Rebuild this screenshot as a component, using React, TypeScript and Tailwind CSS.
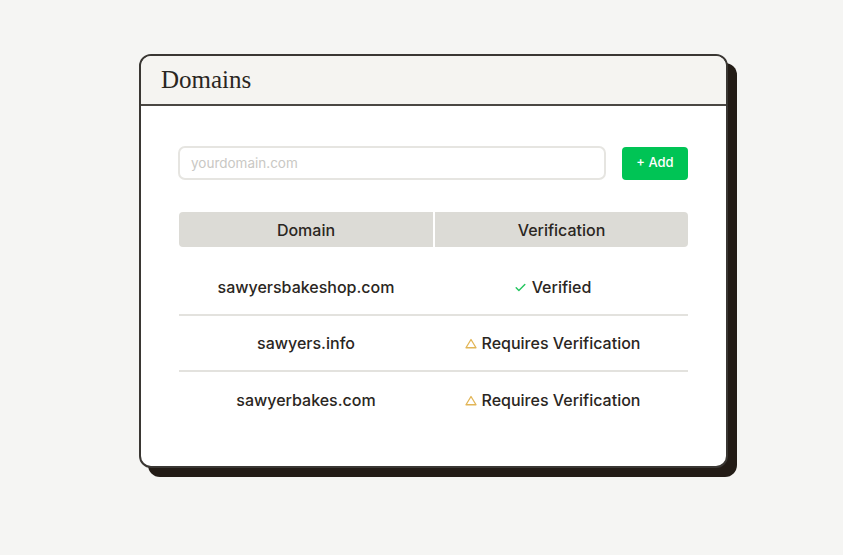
import React from "react";

const Check = () => (
  <svg width="13" height="13" viewBox="0 0 24 24" fill="none" stroke="#22c55e" strokeWidth="2.6" strokeLinecap="round" strokeLinejoin="round">
    <path d="M4 12.5l5 5L20 6.5" />
  </svg>
);

const Warn = () => (
  <svg width="12" height="11" viewBox="0 0 24 22" fill="none" stroke="#e2b556" strokeWidth="2.6" strokeLinejoin="round">
    <path d="M12 3L22 19.5H2Z" />
  </svg>
);

const rows = [
  { d: "sawyersbakeshop.com", ok: true },
  { d: "sawyers.info", ok: false },
  { d: "sawyerbakes.com", ok: false },
];

export default function App() {
  return (
    <div className="w-[843px] h-[555px] bg-[#f5f5f3] pl-[139px] pt-[54px]" style={{ fontFamily: "Inter, 'Noto Sans', sans-serif" }}>
      <div className="w-[589px] h-[414px] bg-white border-2 border-[#3a3733] rounded-[12px] shadow-[9px_9px_0_#231c16] overflow-hidden flex flex-col">
        <div className="h-[50px] bg-[#f5f4f1] border-b-2 border-[#4a4743] flex items-center pl-[20px]">
          <span className="text-[25px] text-[#2a2622]" style={{ fontFamily: "'Liberation Serif', serif" }}>Domains</span>
        </div>
        <div className="pl-[37px] pr-[38px] pt-[40px] flex flex-col">
          <div className="flex gap-[16px] items-center">
            <div className="flex-1 h-[34px] border-2 border-[#e6e5e1] rounded-[7px] flex items-center pl-[11px] text-[13.5px] text-[#c9c8c4]">
              yourdomain.com
            </div>
            <div className="w-[66px] h-[33px] bg-[#00c455] rounded-[4px] flex items-center justify-center text-white text-[13px] font-medium">
              + Add
            </div>
          </div>
          <div className="mt-[32px] ml-[1px] h-[35px] flex rounded-[4px] overflow-hidden bg-[#dcdbd6] text-[16px] font-medium text-[#2a2622]">
            <div className="w-[256px] flex items-center justify-center border-r-2 border-white">Domain</div>
            <div className="flex-1 flex items-center justify-center">Verification</div>
          </div>
          <div className="mt-[13px] ml-[1px] flex flex-col text-[16px] font-medium text-[#2a2622]">
            {rows.map((r, i) => (
              <div key={r.d} className={"h-[56px] flex " + (i < rows.length - 1 ? "border-b-2 border-[#e3e2de]" : "")}>
                <div className="w-[254px] flex items-center justify-center">{r.d}</div>
                <div className="flex-1 flex items-center justify-center gap-[5px] pr-[16px]">
                  {r.ok ? <Check /> : <Warn />}
                  <span>{r.ok ? "Verified" : "Requires Verification"}</span>
                </div>
              </div>
            ))}
          </div>
        </div>
      </div>
    </div>
  );
}
